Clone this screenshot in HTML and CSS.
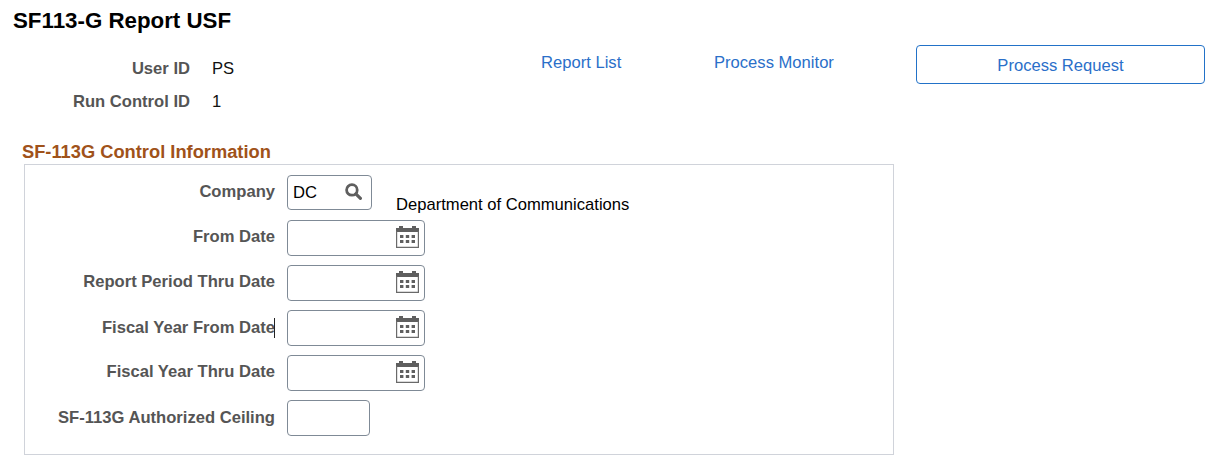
FILE: index.html
```html
<!DOCTYPE html>
<html lang="en">
<head>
<meta charset="utf-8">
<title>SF113-G Report USF</title>
<link rel="stylesheet" href="styles.css">
</head>
<body>
<svg class="defs" width="0" height="0" aria-hidden="true">
  <symbol id="cal" viewBox="0 0 23 23">
    <path fill="#5f5f5f" d="M0 3h3V1h4v2h9V1h4v2h3v4H0z"/>
    <path fill="none" stroke="#6a6a6a" stroke-width="1.2" d="M.6 6v16.4h21.8V6"/>
    <path fill="#5f5f5f" d="M4 10h3.4v3H4zM9.8 10h3.4v3H9.8zM15.6 10H19v3h-3.4zM4 15h3.4v3H4zM9.8 15h3.4v3H9.8zM15.6 15H19v3h-3.4z"/>
  </symbol>
</svg>
<h1 class="title">SF113-G Report USF</h1>
<div class="top">
  <dl class="ids">
    <dt>User ID</dt><dd>PS</dd>
    <dt>Run Control ID</dt><dd>1</dd>
  </dl>
  <nav class="links">
    <a class="link link-list" href="#">Report List</a>
    <a class="link link-monitor" href="#">Process Monitor</a>
  </nav>
  <a class="btn" href="#">Process Request</a>
</div>
<h2 class="section">SF-113G Control Information</h2>
<div class="box">
  <div class="row row-first">
    <label class="lbl">Company</label>
    <div class="field field-company"><span class="val">DC</span>
      <svg class="search" viewBox="0 0 16 16" width="17" height="17"><circle cx="6.5" cy="6.5" r="5" fill="none" stroke="#5f5f5f" stroke-width="2.6"/><path d="M10.2 10.2l4.3 4.3" stroke="#5f5f5f" stroke-width="3" stroke-linecap="round"/></svg>
    </div>
    <span class="desc">Department of Communications</span>
  </div>
  <div class="row">
    <label class="lbl">From Date</label>
    <div class="field field-date"><svg class="calicon"><use href="#cal"/></svg></div>
  </div>
  <div class="row">
    <label class="lbl">Report Period Thru Date</label>
    <div class="field field-date"><svg class="calicon"><use href="#cal"/></svg></div>
  </div>
  <div class="row">
    <label class="lbl lbl-flush">Fiscal Year From Date<span class="caret"></span></label>
    <div class="field field-date"><svg class="calicon"><use href="#cal"/></svg></div>
  </div>
  <div class="row">
    <label class="lbl">Fiscal Year Thru Date</label>
    <div class="field field-date"><svg class="calicon"><use href="#cal"/></svg></div>
  </div>
  <div class="row">
    <label class="lbl lbl-flush">SF-113G Authorized Ceiling</label>
    <div class="field field-num"></div>
  </div>
</div>
</body>
</html>
```
FILE: styles.css
```css
* { box-sizing: border-box; }
html, body { margin: 0; padding: 0; background: #fff; }
body {
  width: 1213px;
  height: 465px;
  overflow: hidden;
  font-family: "Liberation Sans", Arial, sans-serif;
  font-size: 16.6px;
  color: #000;
}
.defs { position: absolute; }
.title {
  margin: 0;
  padding: 10px 0 0 13px;
  height: 45px;
  font-size: 22.3px;
  line-height: 22px;
  font-weight: 700;
}
.top {
  display: flex;
  height: 39px;
}
.ids {
  margin: 13px 0 0;
  width: 500px;
  display: grid;
  grid-template-columns: 190px 1fr;
  grid-auto-rows: 33px;
  column-gap: 22px;
  line-height: 22px;
}
.ids dt { text-align: right; font-weight: 700; color: #555; }
.ids dd { margin: 0; color: #111; }
.links { display: flex; width: 416px; padding-left: 41px; line-height: 22px; }
.link { color: #2a6fc9; text-decoration: none; }
.link-list { width: 173px; margin-top: 7px; }
.link-monitor { margin-top: 7px; }
.btn {
  width: 289px;
  height: 39px;
  border: 1px solid #2272c8;
  border-radius: 4px;
  color: #2a6fc9;
  text-decoration: none;
  text-align: center;
  line-height: 39px;
}
.section {
  margin: 0;
  padding: 58px 0 0 22px;
  height: 80px;
  line-height: 20px;
  font-size: 18.3px;
  font-weight: 700;
  color: #a0521a;
}
.box {
  margin-left: 24px;
  width: 870px;
  height: 291px;
  border: 1px solid #d0d3da;
  padding-top: 10px;
}
.row { display: flex; height: 36px; margin-bottom: 9px; align-items: center; }
.lbl {
  width: 250px;
  padding-bottom: 2px;
  text-align: right;
  font-weight: 700;
  color: #555;
  line-height: 22px;
}
.lbl-flush { padding-bottom: 0; }
.field {
  margin-left: 12px;
  height: 36px;
  border: 1px solid #7f8a96;
  border-radius: 4px;
  display: flex;
  align-items: center;
  justify-content: space-between;
}
.field-company { width: 85px; height: 35px; padding: 0 9px 0 5px; align-self: flex-start; }
.field-date { width: 138px; padding: 0 5px 4px 0; justify-content: flex-end; }
.field-num { width: 83px; }
.val { line-height: 22px; }
.search { display: block; margin-top: -2px; }
.calicon { width: 23px; height: 23px; display: block; }
.desc { margin-left: 24px; margin-top: 23px; line-height: 22px; white-space: nowrap; }
.caret {
  display: inline-block;
  width: 1px;
  height: 20px;
  margin-left: -1px;
  vertical-align: -5px;
  background: #222;
}
```
